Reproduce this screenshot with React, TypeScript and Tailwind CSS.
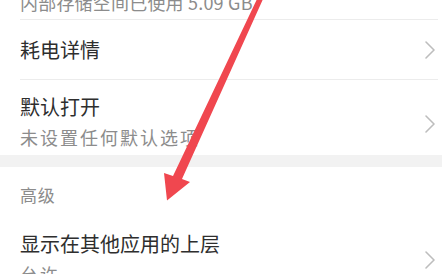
import * as React from "react";

const cjk = { fontFamily: '"Noto Sans CJK SC", "Noto Sans", sans-serif' };

const Chevron = () => (
  <svg width="12" height="20" viewBox="0 0 12 20" className="shrink-0">
    <polyline points="2,2 10,10 2,18" fill="none" stroke="#bdbdbd" strokeWidth="1.6" strokeLinecap="round" strokeLinejoin="round" />
  </svg>
);

type RowProps = { title: string; subtitle?: string; divider?: boolean; className?: string; subClass?: string };

const Row = ({ title, subtitle, divider = true, className = "", subClass = "tracking-[2px]" }: RowProps) => (
  <div className={`ml-5 mr-1 flex items-center pr-[2px] ${divider ? "border-b border-[#ececec]" : ""} ${className}`}>
    <div className="flex-1">
      <div className="text-[20px] leading-[28px] text-[#2e2e2e]">{title}</div>
      {subtitle && (
        <div className={`text-[18px] leading-[33px] text-[#8c8c8c] ${subClass}`}>{subtitle}</div>
      )}
    </div>
    <Chevron />
  </div>
);

export default function App() {
  return (
    <div className="relative h-[274px] w-[442px] overflow-hidden bg-white" style={cjk}>
      <div className="-mt-[55px]">
        <Row
          title="存储"
          subtitle="内部存储空间已使用 5.09 GB"
          subClass="tracking-[0.2px]"
          className="h-[75px] pt-[12px]"
        />
        <Row title="耗电详情" className="h-[60px]" />
        <Row title="默认打开" subtitle="未设置任何默认选项" divider={false} className="h-[75px] pt-[12px]" />
        <div className="h-[12px] bg-[#f2f2f2]" />
        <div className="px-5 pt-[16px] pb-[10px] text-[17px] leading-[24px] tracking-[0.7px] text-[#8c8c8c]">高级</div>
        <Row title="显示在其他应用的上层" subtitle="允许" className="h-[75px] pt-[12px]" />
      </div>

      {/* red annotation arrow drawn over the list */}
      <svg className="pointer-events-none absolute inset-0" width="442" height="274" viewBox="0 0 442 274">
        <polygon
          points="257.5,-2 263.5,-2 182,179 190,182 167,200.5 164,173 173,176"
          fill="#f0474f"
        />
      </svg>
    </div>
  );
}
